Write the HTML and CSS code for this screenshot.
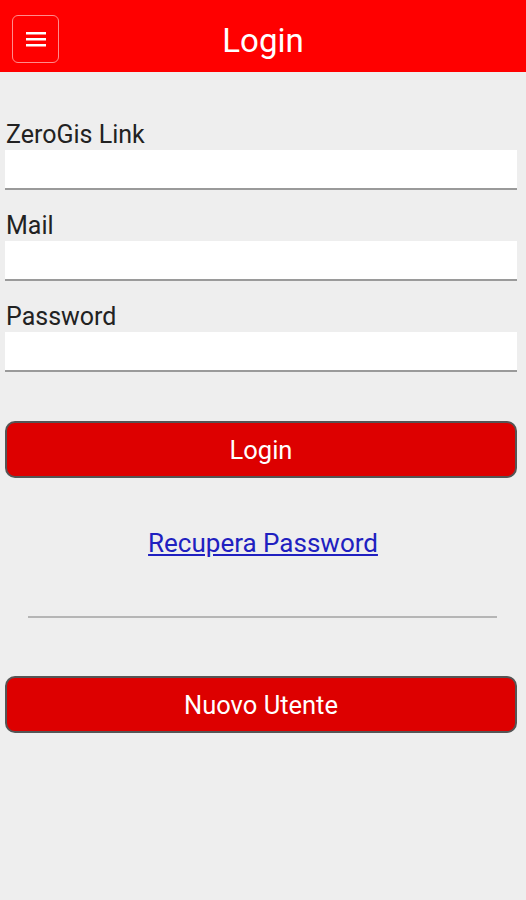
FILE: index.html
```html
<!DOCTYPE html>
<html lang="it">
<head>
    <meta charset="UTF-8">
    <title>Login</title>
    <meta name="viewport" content="width=device-width, initial-scale=1.0">
    <link rel="stylesheet" href="styles.css">
</head>
<body>
    <header class="topbar">
        <button class="menu-btn" type="button" aria-label="Menu">
            <svg width="20" height="16" viewBox="0 0 20 16">
                <rect x="0" y="1" width="20" height="2.5" fill="#fff"/>
                <rect x="0" y="7" width="20" height="2.5" fill="#fff"/>
                <rect x="0" y="13" width="20" height="2.5" fill="#fff"/>
            </svg>
        </button>
        <h1 class="topbar-title">Login</h1>
        <span></span>
    </header>
    <main class="login-form">
        <label class="field">
            <span class="field-label">ZeroGis Link</span>
            <input type="text" class="field-input">
        </label>
        <label class="field">
            <span class="field-label">Mail</span>
            <input type="email" class="field-input">
        </label>
        <label class="field">
            <span class="field-label">Password</span>
            <input type="password" class="field-input">
        </label>
        <button class="red-btn login-btn" type="button">Login</button>
        <div class="recover-row">
            <a href="#" class="recover-link">Recupera Password</a>
        </div>
        <hr class="divider">
        <button class="red-btn" type="button">Nuovo Utente</button>
    </main>
</body>
</html>
```

FILE: styles.css
```css
* {
    box-sizing: border-box;
}
body {
    margin: 0;
    background: #eeeeee;
    font-family: Roboto, 'Noto Sans', Arial, sans-serif;
    color: #222;
    min-height: 100vh;
}
.topbar {
    height: 72px;
    background: #ff0000;
    display: grid;
    grid-template-columns: 1fr auto 1fr;
    align-items: center;
    padding: 6px 0 0 12px;
}
.menu-btn {
    width: 47px;
    height: 48px;
    border: 1.5px solid #ff8c8c;
    border-radius: 6px;
    background: transparent;
    display: flex;
    align-items: center;
    justify-content: center;
    padding: 0;
    justify-self: start;
}
.topbar-title {
    margin: 4px 0 0 -12px;
    color: #fff;
    font-size: 33px;
    font-weight: normal;
    line-height: 38px;
}
.login-form {
    padding: 46px 9px 0 5px;
}
.field {
    display: block;
    margin-bottom: 19px;
}
.field-label {
    display: block;
    font-size: 25px;
    line-height: 28px;
    padding-top: 3px;
    margin: 0 0 1px 1px;
}
.field-input {
    display: block;
    width: 100%;
    height: 40px;
    border: none;
    border-bottom: 2px solid #9a9a9a;
    background: #fff;
    font-size: 20px;
    font-family: inherit;
    outline: none;
}
.red-btn {
    display: block;
    width: 100%;
    height: 57px;
    background: #dd0000;
    color: #fff;
    border: 2px solid #555;
    border-radius: 10px;
    font-family: inherit;
    font-size: 25.5px;
    margin: 0;
}
.login-btn {
    margin-top: 49px;
}
.recover-row {
    text-align: center;
    margin-top: 51px;
    padding-left: 4px;
}
.recover-link {
    color: #2020c0;
    font-size: 26px;
    line-height: 29px;
}
.divider {
    border: none;
    border-top: 2px solid #b5b5b5;
    margin: 58px 20px 58px 23px;
}
```
